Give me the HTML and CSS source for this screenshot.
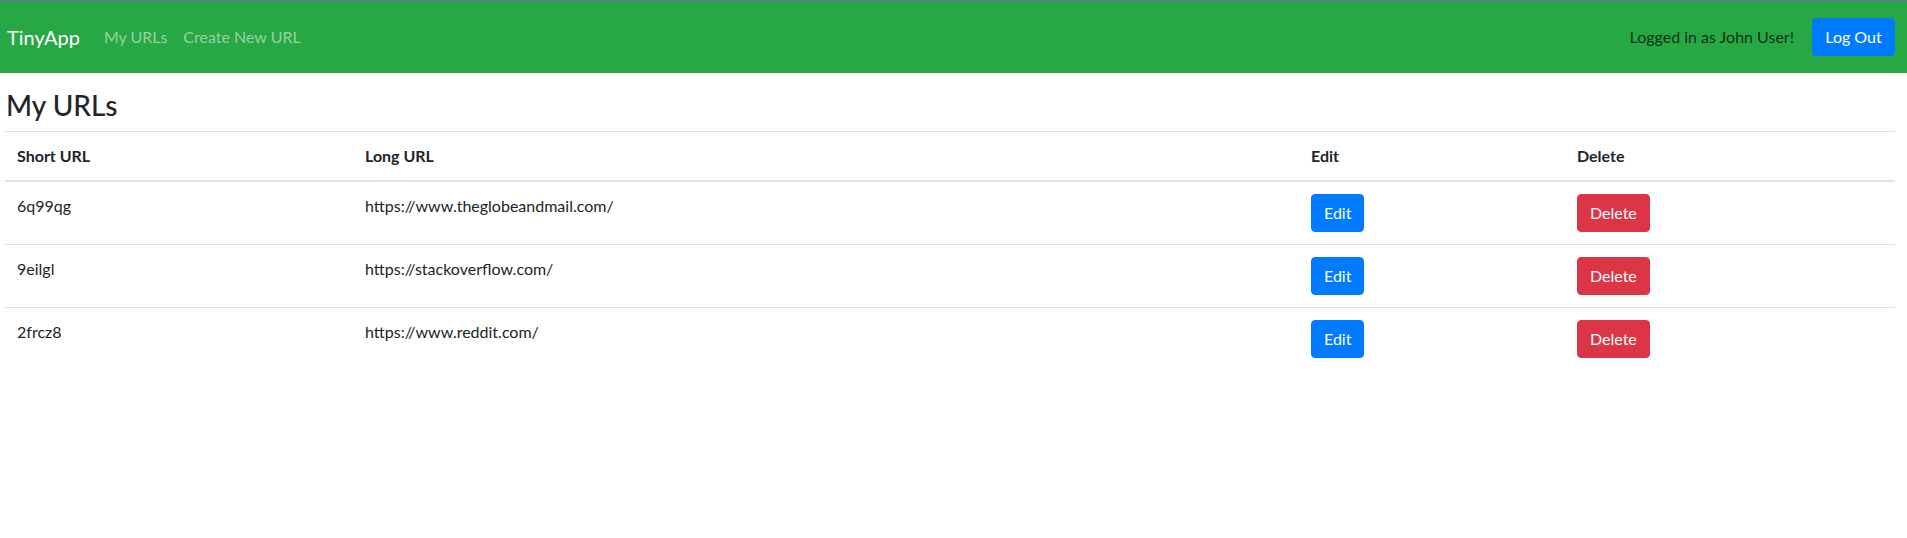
FILE: index.html
```html
<!DOCTYPE html>
<html lang="en">
<head>
<meta charset="utf-8">
<title>TinyApp</title>
<link rel="stylesheet" href="styles.css">
</head>
<body>
<nav class="navbar">
  <div class="nav-left">
    <a class="brand" href="#">TinyApp</a>
    <a class="nav-link" href="#">My URLs</a>
    <a class="nav-link" href="#">Create New URL</a>
  </div>
  <div class="nav-right">
    <span class="nav-text">Logged in as John User!</span>
    <button class="btn btn-primary btn-logout">Log Out</button>
  </div>
</nav>
<main class="main">
  <h3 class="title">My URLs</h3>
  <table class="table">
    <colgroup>
      <col class="c-short">
      <col class="c-long">
      <col class="c-edit">
      <col class="c-delete">
    </colgroup>
    <thead>
      <tr>
        <th>Short URL</th>
        <th>Long URL</th>
        <th>Edit</th>
        <th>Delete</th>
      </tr>
    </thead>
    <tbody>
      <tr>
        <td>6q99qg</td>
        <td>https://www.theglobeandmail.com/</td>
        <td><button class="btn btn-primary">Edit</button></td>
        <td><button class="btn btn-danger">Delete</button></td>
      </tr>
      <tr>
        <td>9eilgl</td>
        <td>https://stackoverflow.com/</td>
        <td><button class="btn btn-primary">Edit</button></td>
        <td><button class="btn btn-danger">Delete</button></td>
      </tr>
      <tr>
        <td>2frcz8</td>
        <td>https://www.reddit.com/</td>
        <td><button class="btn btn-primary">Edit</button></td>
        <td><button class="btn btn-danger">Delete</button></td>
      </tr>
    </tbody>
  </table>
</main>
</body>
</html>
```
FILE: styles.css
```css
* { box-sizing: border-box; }
html, body { margin: 0; padding: 0; }
body {
  font-family: Lato, "Open Sans", sans-serif;
  font-size: 16px;
  line-height: 1.5;
  color: #212529;
  background: #fff;
  border-top: 1px solid #7e63b6;
}
a { text-decoration: none; }

.navbar {
  height: 72px;
  background: #28a745;
  display: flex;
  align-items: center;
  justify-content: space-between;
  padding: 0 12px 0 7px;
}
.nav-left { display: flex; align-items: center; }
.brand {
  color: #fff;
  font-size: 20px;
  line-height: 30px;
  margin-right: 16px;
}
.nav-link {
  color: rgba(255, 255, 255, 0.5);
  padding: 0 8px;
  line-height: 24px;
}
.nav-right { display: flex; align-items: center; gap: 18px; }
.nav-text { color: rgba(0, 0, 0, 0.72); }

.btn {
  font-family: inherit;
  font-size: 16px;
  line-height: 24px;
  padding: 6px 12px;
  border: 1px solid transparent;
  border-radius: 4px;
  color: #fff;
  cursor: pointer;
  display: inline-block;
}
.btn-primary { background: #007bff; border-color: #007bff; }
.btn-danger { background: #dc3545; border-color: #dc3545; }
.btn-logout { width: 83px; padding: 6px 0; }

.main { padding: 0 12px 0 5px; }
.title {
  margin: 16px 0 8px 1px;
  font-size: 28px;
  font-weight: 500;
  line-height: 1.2;
}

.table {
  width: 100%;
  border-collapse: collapse;
  table-layout: fixed;
}
.c-short { width: 348px; }
.c-long { width: 946px; }
.c-edit { width: 266px; }
.c-delete { width: auto; }
.table th, .table td {
  padding: 12px;
  text-align: left;
  vertical-align: top;
  border-top: 1px solid #dee2e6;
}
.table thead th {
  font-weight: 700;
  border-bottom: 2px solid #dee2e6;
  vertical-align: bottom;
}
```
